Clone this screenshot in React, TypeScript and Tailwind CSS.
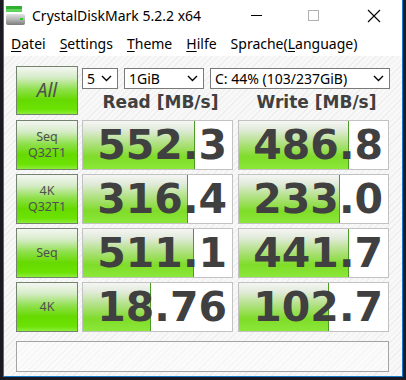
import React from "react";

const rows = [
  { l1: "Seq", l2: "Q32T1", r: "552.3", w: "486.8", rf: 112, wf: 110 },
  { l1: "4K", l2: "Q32T1", r: "316.4", w: "233.0", rf: 105, wf: 101 },
  { l1: "Seq", l2: "", r: "511.1", w: "441.7", rf: 111, wf: 110 },
  { l1: "4K", l2: "", r: "18.76", w: "102.7", rf: 68, wf: 90 },
];

function Chevron() {
  return (
    <svg width="11" height="7" viewBox="0 0 11 7" className="shrink-0">
      <path d="M1 1 L5.5 5.5 L10 1" fill="none" stroke="#000" strokeWidth="1.4" />
    </svg>
  );
}

function Select({ text, w }: { text: string; w: string }) {
  return (
    <div className={`${w} h-[21px] bg-white border border-[#7a7a7a] flex items-center justify-between pl-[4px] pr-[5px] text-[14px] text-black`}>
      <span className="leading-none">{text}</span>
      <Chevron />
    </div>
  );
}

function Cell({ value, fill }: { value: string; fill: number }) {
  return (
    <div className="relative w-[151px] h-[50px] bg-white border border-[#c2c2c2] overflow-hidden">
      <div
        className="absolute left-0 top-0 bottom-0 border-r border-[#4e9a26] bg-[linear-gradient(to_bottom,#f5f5f4_0%,#e2ebdb_18%,#ade07c_48%,#7fdc28_75%,#8be83a_100%)]"
        style={{ width: fill }}
      />
      <div className="relative h-full flex items-center justify-end pr-[5px] font-['DejaVu_Sans',sans-serif] font-bold text-[41px] leading-none text-[#404040]">
        {value}
      </div>
    </div>
  );
}

function Label({ l1, l2 }: { l1: string; l2?: string }) {
  return (
    <div className="w-[62px] h-[50px] border border-[#74836e] bg-[linear-gradient(to_bottom,#f4f6f2_0%,#d6ecc8_22%,#8ee04a_48%,#66da00_70%,#6be204_90%,#8cee3a_100%)] flex items-center justify-center text-[#505050]">
      <span className="text-[12.5px] leading-[16px] text-center whitespace-pre-line">
        {l2 ? `${l1}\n${l2}` : l1}
      </span>
    </div>
  );
}

export default function App() {
  return (
    <div className="w-[406px] h-[380px] bg-[#1b1a22] px-[3px] pb-[3px] overflow-hidden font-['Noto_Sans',sans-serif]">
      <div className="h-[377px] border-x border-b border-[#1979ca] bg-white flex flex-col">
        {/* Title bar */}
        <div className="h-[31px] flex items-center shrink-0 relative">
          <svg width="20" height="20" viewBox="0 0 20 20" className="ml-[2px]">
            <defs>
              <linearGradient id="body" x1="0" y1="0" x2="0" y2="1">
                <stop offset="0" stopColor="#e2e2e2" />
                <stop offset="0.5" stopColor="#b4b4b4" />
                <stop offset="1" stopColor="#7c7c7c" />
              </linearGradient>
            </defs>
            <rect x="0" y="0" width="16" height="3" fill="#2fae2f" />
            <rect x="0" y="3" width="16" height="3" fill="#5fd25f" />
            <rect x="0" y="8" width="19" height="11" rx="2" fill="url(#body)" />
            <rect x="14" y="12" width="3" height="2" fill="#2ecc2e" />
          </svg>
          <span className="ml-[6px] text-[14px] text-black leading-none">CrystalDiskMark 5.2.2 x64</span>
          <div className="absolute left-[247px] top-[15px] w-[11px] h-px bg-black" />
          <div className="absolute left-[304px] top-[10px] w-[11px] h-[11px] border border-[#b0b0b0]" />
          <svg width="14" height="14" viewBox="0 0 14 14" className="absolute left-[363px] top-[9px]">
            <path d="M1 1 L13 13 M13 1 L1 13" stroke="#000" strokeWidth="1.1" />
          </svg>
        </div>
        {/* Menu */}
        <div className="h-[25px] flex items-center shrink-0 text-[14px] text-black pl-[7px] gap-[14px]">
          <span><span className="underline underline-offset-2">D</span>atei</span>
          <span><span className="underline underline-offset-2">S</span>ettings</span>
          <span><span className="underline underline-offset-2">T</span>heme</span>
          <span><span className="underline underline-offset-2">H</span>ilfe</span>
          <span>Sprache(<span className="underline underline-offset-2">L</span>anguage)</span>
        </div>
        {/* Content */}
        <div className="flex-1 bg-[repeating-linear-gradient(135deg,#f8f8f8_0px,#f8f8f8_3px,#eeeeee_3px,#eeeeee_4px)] pl-[12px] pt-[10px] flex flex-col">
          <div className="flex gap-[4px]">
            <div className="w-[62px] h-[49px] border border-[#74836e] bg-[linear-gradient(to_bottom,#f4f6f2_0%,#d6ecc8_22%,#8ee04a_48%,#66da00_70%,#6be204_90%,#8cee3a_100%)] flex items-center justify-center text-[#505050]">
              <span className="text-[19px] italic leading-none">All</span>
            </div>
            <div className="flex flex-col">
              <div className="flex gap-[6px] mt-[2px]">
                <Select text="5" w="w-[36px]" />
                <Select text="1GiB" w="w-[80px]" />
                <Select text="C: 44% (103/237GiB)" w="w-[180px]" />
              </div>
              <div className="flex gap-[5px] mt-[5px] font-['DejaVu_Sans',sans-serif] font-bold text-[17px] text-[#404040] leading-none">
                <div className="w-[151px] text-center pl-[6px]">Read [MB/s]</div>
                <div className="w-[151px] text-center pl-[6px]">Write [MB/s]</div>
              </div>
            </div>
          </div>
          <div className="flex flex-col gap-[4px] mt-[5px]">
            {rows.map((r, i) => (
              <div key={i} className="flex gap-[4px]">
                <Label l1={r.l1} l2={r.l2} />
                <div className="flex gap-[5px]">
                  <Cell value={r.r} fill={r.rf} />
                  <Cell value={r.w} fill={r.wf} />
                </div>
              </div>
            ))}
          </div>
          <div className="mt-[9px] w-[373px] h-[31px] border border-[#a4a4a4] bg-white/40" />
        </div>
      </div>
    </div>
  );
}
